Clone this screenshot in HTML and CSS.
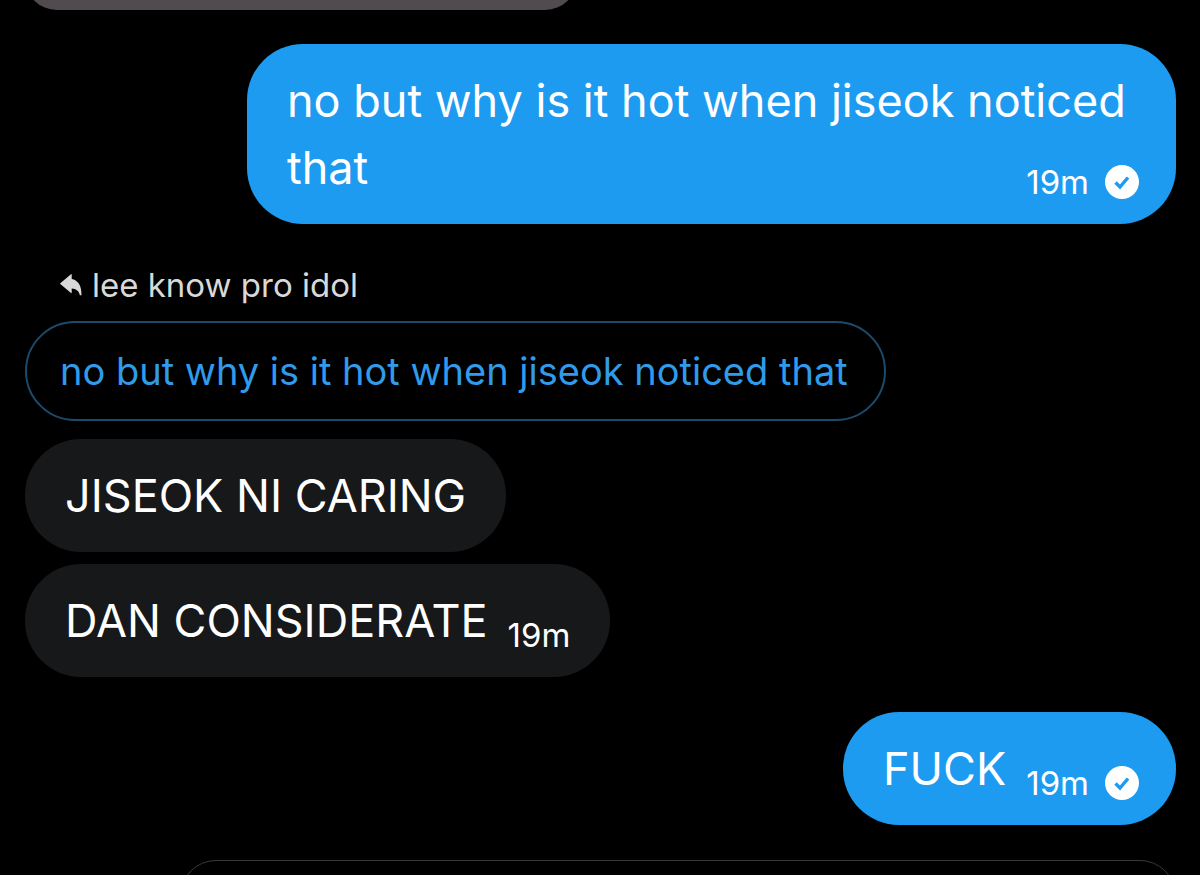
FILE: index.html
```html
<!DOCTYPE html>
<html lang="en">
<head>
    <meta charset="UTF-8">
    <meta name="viewport" content="width=device-width, initial-scale=1.0">
    <title>Messages</title>
    <link rel="stylesheet" href="styles.css">
</head>
<body>
    <main class="thread">
        <div class="photo-clip">
            <div class="photo"></div>
        </div>

        <div class="bubble sent">
            no but why is it hot when jiseok noticed that
            <span class="meta">
                <time>19m</time>
                <svg class="check" viewBox="0 0 34 34" role="img" aria-label="Sent">
                    <circle cx="17" cy="17" r="17" fill="#fff"/>
                    <path d="M10.500 17.500l4.500 4.500 8-9.500" fill="none" stroke="#1d9bf0" stroke-width="3.400"/>
                </svg>
            </span>
        </div>

        <div class="reply-label">
            <svg class="reply-icon" viewBox="0 0 22 22" aria-hidden="true">
                <path d="M.3 9.200L11 .2q.7-.4.7.4v4.300C18 6 22 12 21.400 21.300h-1.500c-1-4.300-3.500-6.500-8.200-6.800v4.300q0 .7-.7.300L.3 10q-.4-.4 0-.8z" fill="#d9d9d9"/>
            </svg>
            <span>lee know pro idol</span>
        </div>
        <div class="quote">no but why is it hot when jiseok noticed that</div>

        <div class="bubble received">JISEOK NI CARING</div>
        <div class="bubble received last">
            DAN CONSIDERATE
            <span class="meta"><time>19m</time></span>
        </div>

        <div class="bubble sent">
            FUCK
            <span class="meta">
                <time>19m</time>
                <svg class="check" viewBox="0 0 34 34" role="img" aria-label="Sent">
                    <circle cx="17" cy="17" r="17" fill="#fff"/>
                    <path d="M10.500 17.500l4.500 4.500 8-9.500" fill="none" stroke="#1d9bf0" stroke-width="3.400"/>
                </svg>
            </span>
        </div>

        <div class="card"></div>
    </main>
</body>
</html>
```
FILE: styles.css
```css
body {
    margin: 0;
    height: 100vh;
    overflow: hidden;
    background-color: #000;
    color: #fff;
    font-family: Inter, "Liberation Sans", sans-serif;
}
.thread {
    display: flex;
    flex-direction: column;
    align-items: flex-start;
    padding: 0 24px 0 25px;
}
.photo-clip {
    display: flex;
    align-items: flex-end;
    width: 48%;
    height: 10px;
    margin-bottom: 34px;
    overflow: hidden;
}
.photo {
    flex: 1 0 auto;
    height: 80px;
    border-radius: 32px;
    background-color: #514b50;
}
.bubble {
    box-sizing: border-box;
    max-width: 929px;
    padding: 23px 40px;
    border-radius: 56px;
    font-size: 45px;
    line-height: 67px;
}
.sent {
    align-self: flex-end;
    margin-bottom: 35px;
    padding-right: 37px;
    background-color: #1d9bf0;
}
.received {
    margin-bottom: 12px;
    background-color: #16181a;
}
.last {
    margin-bottom: 35px;
}
.meta {
    display: flex;
    float: right;
    gap: 16px;
    margin: 31px 0 0 20px;
    font-size: 33px;
    line-height: 34px;
}
.check {
    width: 34px;
    height: 34px;
}
.reply-label {
    display: flex;
    align-items: center;
    gap: 10px;
    margin: 0 0 10px 35px;
    color: #d9d9d9;
    font-size: 33px;
    line-height: 52px;
}
.reply-icon {
    width: 22px;
    height: 22px;
}
.quote {
    padding: 0 36px 0 33px;
    margin-bottom: 18px;
    border: 2px solid #1c4a6b;
    border-radius: 50px;
    color: #2f9bea;
    font-size: 38px;
    line-height: 96px;
}
.card {
    box-sizing: border-box;
    align-self: flex-end;
    width: 996px;
    max-width: 100%;
    height: 100px;
    border: 1px solid #38393b;
    border-radius: 36px;
}
```
